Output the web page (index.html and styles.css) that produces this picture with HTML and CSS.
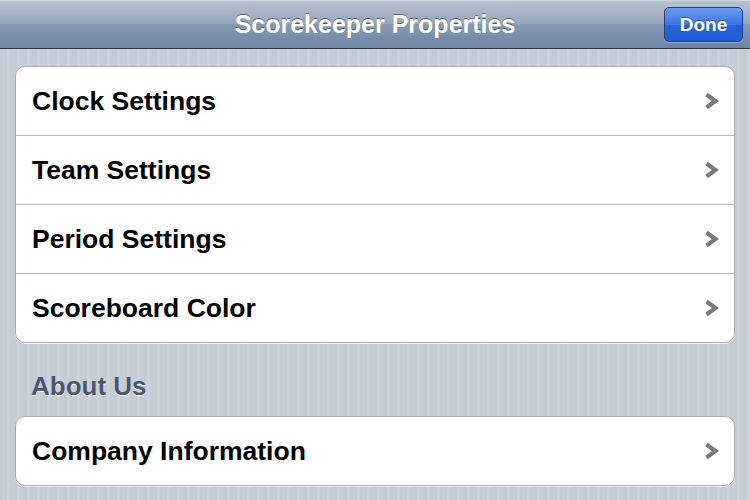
FILE: index.html
```html
<!DOCTYPE html>
<html lang="en">
<head>
<meta charset="UTF-8">
<meta name="viewport" content="width=device-width, initial-scale=1.0">
<title>Scorekeeper Properties</title>
<link rel="stylesheet" href="styles.css">
</head>
<body>
  <div class="nav-bar">
    <h1 class="nav-title">Scorekeeper Properties</h1>
    <button class="done-button">Done</button>
  </div>
  <div class="content">
    <ul class="group">
      <li class="group-row">
        <span>Clock Settings</span>
        <svg class="chevron" width="15" height="18" viewBox="0 0 15 18"><path d="M2.5 2.5 L11.5 9 L2.5 15.5" fill="none" stroke="#7b7b7b" stroke-width="4.2"/></svg>
      </li>
      <li class="group-row">
        <span>Team Settings</span>
        <svg class="chevron" width="15" height="18" viewBox="0 0 15 18"><path d="M2.5 2.5 L11.5 9 L2.5 15.5" fill="none" stroke="#7b7b7b" stroke-width="4.2"/></svg>
      </li>
      <li class="group-row">
        <span>Period Settings</span>
        <svg class="chevron" width="15" height="18" viewBox="0 0 15 18"><path d="M2.5 2.5 L11.5 9 L2.5 15.5" fill="none" stroke="#7b7b7b" stroke-width="4.2"/></svg>
      </li>
      <li class="group-row">
        <span>Scoreboard Color</span>
        <svg class="chevron" width="15" height="18" viewBox="0 0 15 18"><path d="M2.5 2.5 L11.5 9 L2.5 15.5" fill="none" stroke="#7b7b7b" stroke-width="4.2"/></svg>
      </li>
    </ul>
    <h2 class="group-header">About Us</h2>
    <ul class="group">
      <li class="group-row">
        <span>Company Information</span>
        <svg class="chevron" width="15" height="18" viewBox="0 0 15 18"><path d="M2.5 2.5 L11.5 9 L2.5 15.5" fill="none" stroke="#7b7b7b" stroke-width="4.2"/></svg>
      </li>
    </ul>
  </div>
</body>
</html>
```

FILE: styles.css
```css
body {
  font-family: "Liberation Sans", Arial, sans-serif;
  margin: 0;
  padding: 0;
  height: 500px;
  overflow: hidden;
  background-color: #c5ccd4;
  background-image: repeating-linear-gradient(90deg, #c5ccd4 0, #c5ccd4 7px, #cbd2d9 7px, #cbd2d9 10px);
}
.nav-bar {
  height: 48px;
  display: flex;
  align-items: center;
  justify-content: center;
  position: relative;
  background: linear-gradient(to bottom, #b9c4d3 0%, #94a5bc 50%, #8599b3 51%, #6d84a2 100%);
  border-bottom: 1px solid #2d3642;
  box-shadow: inset 0 1px 0 #cdd5df;
}
.nav-title {
  margin: 0;
  color: #fff;
  font-size: 25px;
  font-weight: bold;
  text-shadow: 0 -1px 0 rgba(0, 0, 0, 0.45);
}
.done-button {
  position: absolute;
  right: 7px;
  top: 7px;
  width: 79px;
  height: 35px;
  border: 1px solid #213f79;
  border-radius: 5px;
  background: linear-gradient(to bottom, #6a9cf0 0%, #3c77e6 50%, #2563dc 51%, #1f5bd6 100%);
  color: #fff;
  font-family: "Liberation Sans", Arial, sans-serif;
  font-size: 19px;
  font-weight: bold;
  text-shadow: 0 -1px 0 rgba(0, 0, 0, 0.35);
  box-shadow: 0 1px 0 rgba(255, 255, 255, 0.3);
  padding: 0;
}
.content {
  padding: 17px 15px 0 15px;
}
.group {
  list-style-type: none;
  margin: 0;
  padding: 0;
  background-color: #fff;
  border: 1px solid #a8abb0;
  border-radius: 10px;
  box-shadow: 0 1px 0 rgba(255, 255, 255, 0.7);
}
.group-row {
  height: 68px;
  display: flex;
  align-items: center;
  justify-content: space-between;
  padding: 0 15px 0 16px;
  border-bottom: 1px solid #b6b7b9;
  font-size: 26.5px;
  font-weight: bold;
  color: #000;
}
.group-row:last-child {
  border-bottom: none;
}
.group-header {
  margin: 28px 0 15px 16px;
  height: 30px;
  line-height: 30px;
  font-size: 26px;
  font-weight: bold;
  color: #4c566c;
  text-shadow: 0 1px 0 #fff;
}
```
